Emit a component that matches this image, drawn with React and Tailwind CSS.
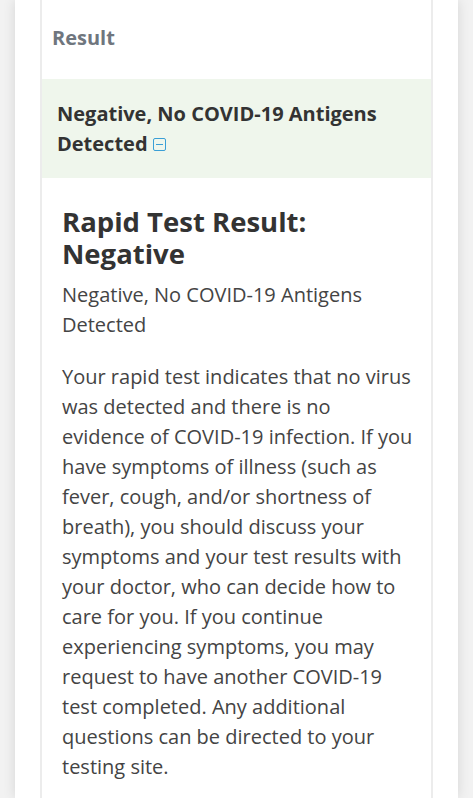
const bodyLines = [
  "Your rapid test indicates that no virus",
  "was detected and there is no",
  "evidence of COVID-19 infection. If you",
  "have symptoms of illness (such as",
  "fever, cough, and/or shortness of",
  "breath), you should discuss your",
  "symptoms and your test results with",
  "your doctor, who can decide how to",
  "care for you. If you continue",
  "experiencing symptoms, you may",
  "request to have another COVID-19",
  "test completed. Any additional",
  "questions can be directed to your",
  "testing site.",
];

export default function App() {
  return (
    <div
      className="min-h-[798px] bg-[#f2f2f2] flex justify-center"
      style={{ fontFamily: '"Open Sans", "Liberation Sans", sans-serif' }}
    >
      <div className="w-[443px] bg-white shadow-[0_0_12px_rgba(0,0,0,0.12)] px-[25px]">
        <div className="border-x-2 border-[#ececec] h-[798px] overflow-hidden">
          <div className="pt-[23px] pb-[26px] px-[10px]">
            <h3 className="text-[20px] font-bold text-[#6f767e] leading-[30px]">Result</h3>
          </div>
          <div className="bg-[#eff6ec] px-[15px] pt-[20px] pb-[19px]">
            <p className="text-[20px] font-bold text-[#333] leading-[30px]">
              Negative, No COVID-19 Antigens Detected{" "}
              <span className="inline-flex align-[6px] items-center justify-center w-[13px] h-[13px] border-[1.5px] border-[#3a9fd6] rounded-[2px]">
                <span className="block w-[7px] h-[1.5px] bg-[#3a9fd6]" />
              </span>
            </p>
          </div>
          <div className="pl-[20px] pr-[2px] pt-[28px]">
            <h2 className="text-[27.5px] font-bold text-[#333] leading-[32px]">
              Rapid Test Result: Negative
            </h2>
            <p className="mt-[10px] text-[20px] text-[#444] leading-[30px]">
              Negative, No COVID-19 Antigens Detected
            </p>
            <p className="mt-[22px] text-[20px] text-[#444] leading-[30px]">
              {bodyLines.map((line, i) => (
                <span key={i}>
                  {line}
                  {i < bodyLines.length - 1 && <br />}
                </span>
              ))}
            </p>
          </div>
        </div>
      </div>
    </div>
  );
}
